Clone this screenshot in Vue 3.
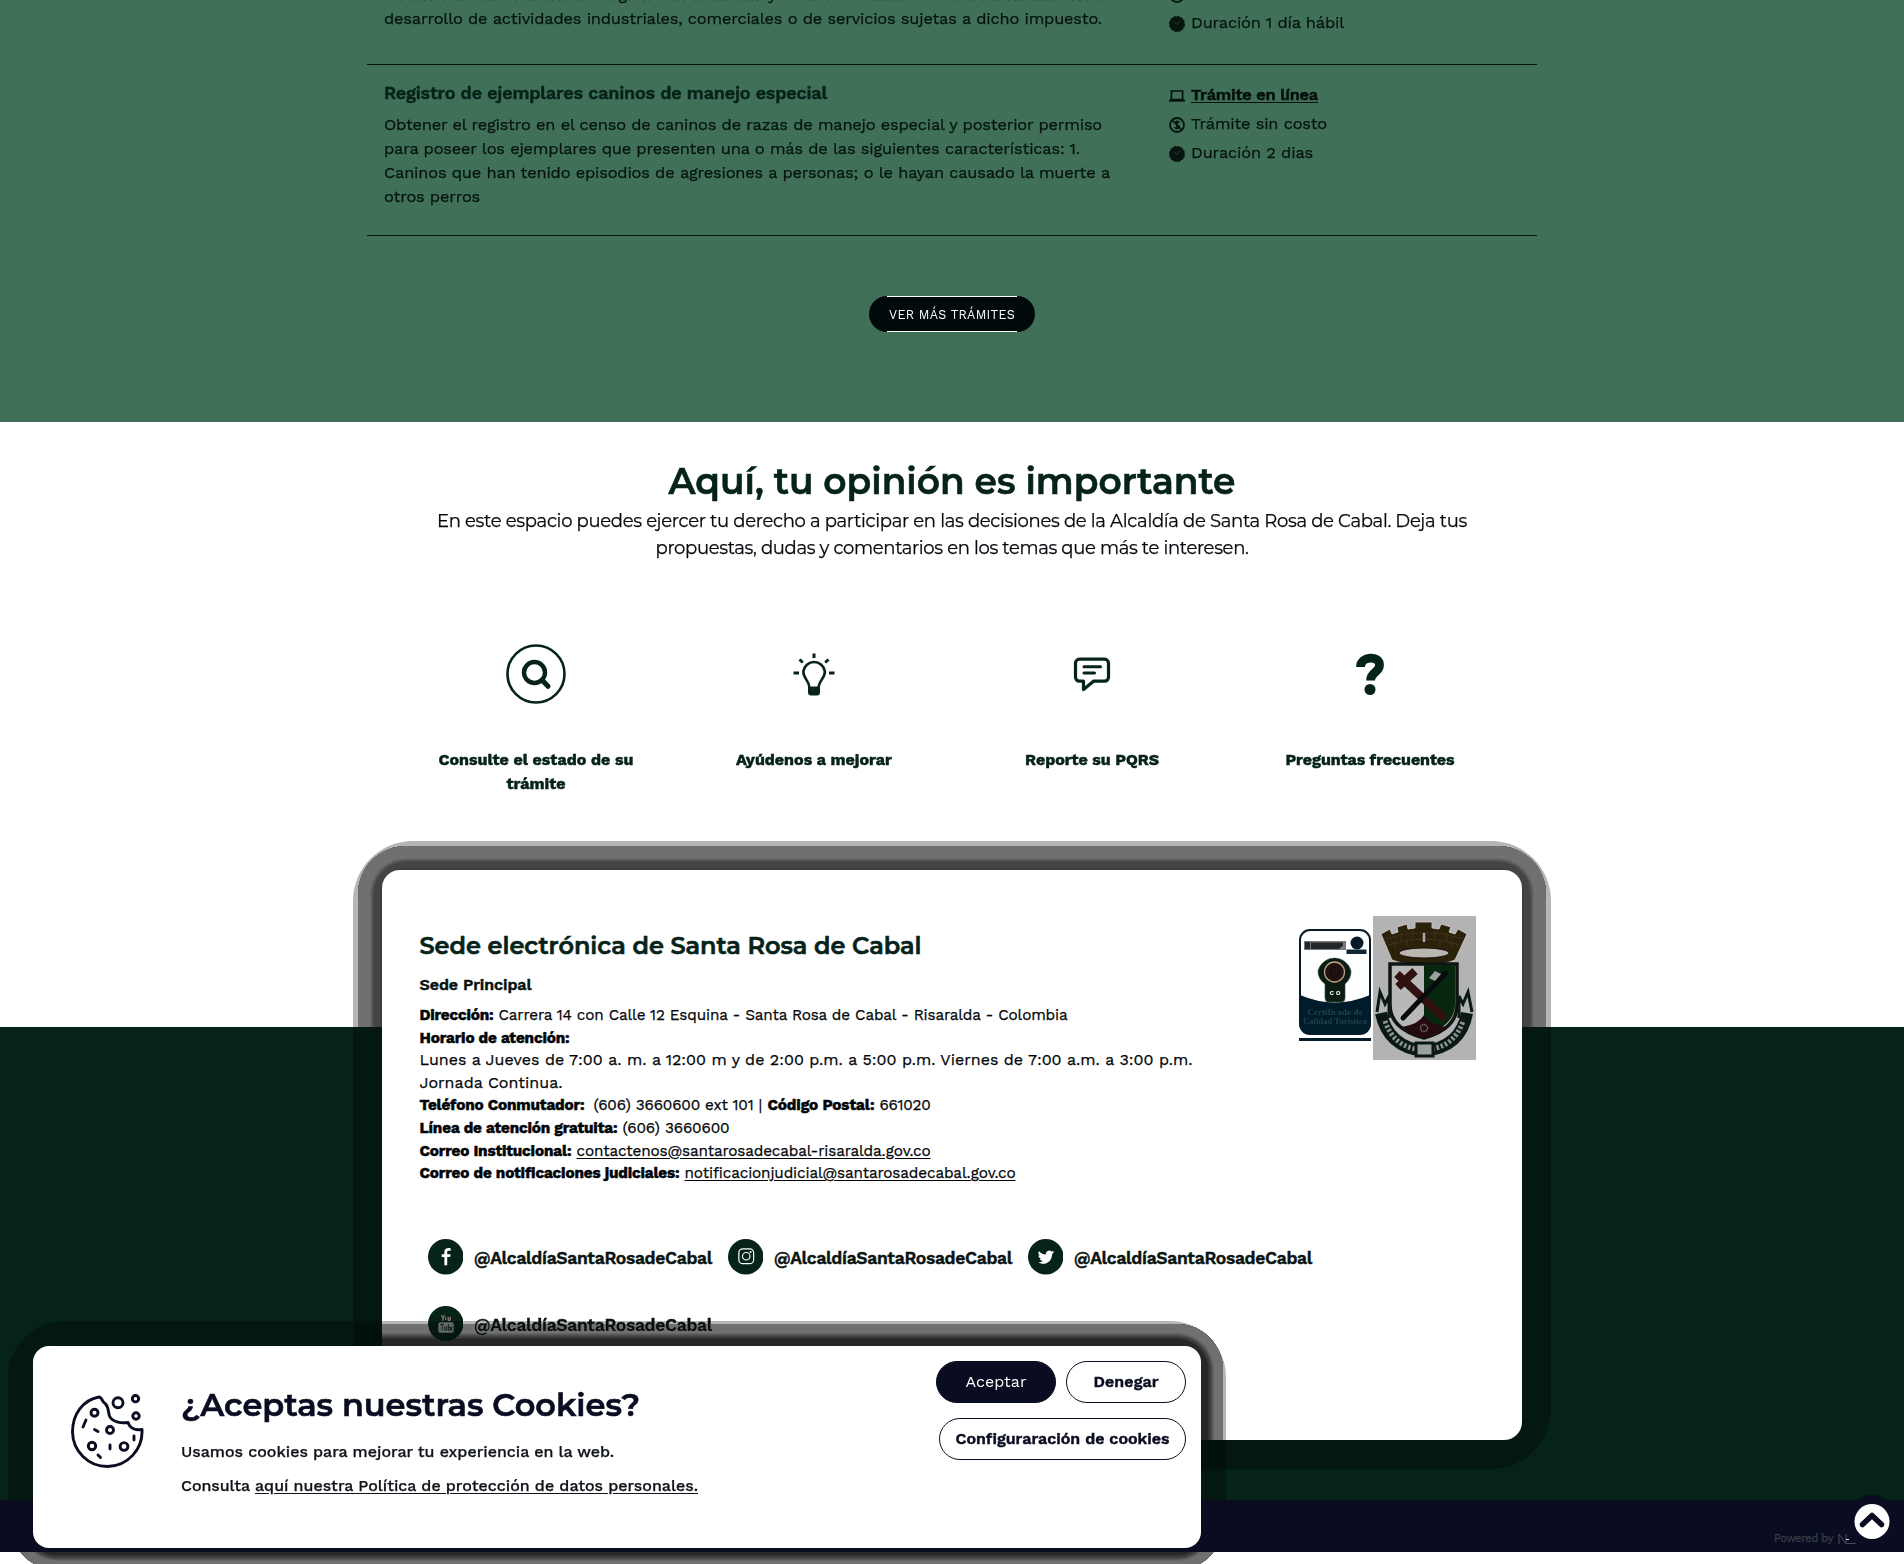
<script setup>
// Spreads the letters of a single line so that it fills the given measure.
const vFit = {
  mounted(el, { value }) {
    const natural = el.getBoundingClientRect().width
    el.style.letterSpacing = (value - natural) / el.textContent.length + 'px'
  }
}

const actions = [
  { icon: 'search', lines: [['Consulte el estado de su', 195], ['trámite', 59]] },
  { icon: 'bulb', lines: [['Ayúdenos a mejorar', 156]] },
  { icon: 'chat', lines: [['Reporte su PQRS', 134]] },
  { icon: 'question', lines: [['Preguntas frecuentes', 169]] }
]

const contact = [
  [['Dirección:', 74, 'b'], ['Carrera 14 con Calle 12 Esquina - Santa Rosa de Cabal - Risaralda - Colombia', 569, '']],
  [['Horario de atención:', 150, 'b']],
  [['Lunes a Jueves de 7:00 a. m. a 12:00 m y de 2:00 p.m. a 5:00 p.m. Viernes de 7:00 a.m. a 3:00 p.m.', 773, 'large']],
  [['Jornada Continua.', 143, 'large']],
  [['Teléfono Conmutador:', 165, 'b wide'], ['(606) 3660600 ext 101', 160, ''], ['|', 4, ''], ['Código Postal:', 107, 'b'], ['661020', 51, '']],
  [['Línea de atención gratuita:', 198, 'b'], ['(606) 3660600', 107, '']],
  [['Correo Institucional:', 152, 'b'], ['contactenos@santarosadecabal-risaralda.gov.co', 354, 'u']],
  [['Correo de notificaciones judiciales:', 260, 'b'], ['notificacionjudicial@santarosadecabal.gov.co', 331, 'u']]
]

const networks = ['facebook', 'instagram', 'twitter', 'youtube']
</script>

<template>
  <div class="page">
    <section class="procedures">
      <div class="list">
        <article class="row first">
          <div class="desc">
            <p><span v-fit="727">Obtener la cancelación del registro de industria y comercio cuando cese definitivamente el</span></p>
            <p><span v-fit="718">desarrollo de actividades industriales, comerciales o de servicios sujetas a dicho impuesto.</span></p>
          </div>
          <ul class="facts">
            <li>
              <svg viewBox="0 0 16 16"><circle cx="8" cy="8" r="7" fill="none" stroke="currentColor" stroke-width="1.9" /></svg>
              <span v-fit="135">Trámite sin costo</span>
            </li>
            <li>
              <svg viewBox="0 0 16 16"><circle cx="8" cy="8" r="7.3" fill="#07140f" stroke="#07140f" stroke-width="1.3" stroke-dasharray="3 .8" /><path d="M5 6l3 2.5 3-4" fill="none" stroke="#35463d" stroke-width=".8" /></svg>
              <span v-fit="153">Duración 1 día hábil</span>
            </li>
          </ul>
        </article>
        <article class="row second">
          <div class="desc">
            <h3><span v-fit="443">Registro de ejemplares caninos de manejo especial</span></h3>
            <p><span v-fit="718">Obtener el registro en el censo de caninos de razas de manejo especial y posterior permiso</span></p>
            <p><span v-fit="696">para poseer los ejemplares que presenten una o más de las siguientes características: 1.</span></p>
            <p><span v-fit="726">Caninos que han tenido episodios de agresiones a personas; o le hayan causado la muerte a</span></p>
            <p><span v-fit="96">otros perros</span></p>
          </div>
          <ul class="facts">
            <li>
              <svg viewBox="0 0 16 16"><path d="M2.400 3h11.200v8.500H2.400z" fill="none" stroke="currentColor" stroke-width="1.700" /><path d="M0 11.500h16v2.200H0z" fill="currentColor" /></svg>
              <a v-fit="127">Trámite en línea</a>
            </li>
            <li>
              <svg viewBox="0 0 16 16"><circle cx="8" cy="8" r="7" fill="none" stroke="currentColor" stroke-width="1.800" /><path d="M3 3l10 10M10.600 5.600C9.500 4.300 6 4.300 6 6.100c0 2 4.400 1.500 4.400 3.700 0 2-3.500 2.200-4.900.5M8 3.500v9" fill="none" stroke="currentColor" stroke-width="1.500" /></svg>
              <span v-fit="136">Trámite sin costo</span>
            </li>
            <li>
              <svg viewBox="0 0 16 16"><circle cx="8" cy="8" r="7.300" fill="#07140f" stroke="#07140f" stroke-width="1.300" stroke-dasharray="3 .8" /><path d="M5 6l3 2.500 3-4" fill="none" stroke="#35463d" stroke-width=".8" /></svg>
              <span v-fit="122">Duración 2 dias</span>
            </li>
          </ul>
        </article>
      </div>
      <button class="more"><span v-fit="126">VER MÁS TRÁMITES</span></button>
    </section>

    <section class="opinion">
      <h2><span v-fit="567">Aquí, tu opinión es importante</span></h2>
      <p><span v-fit="1030">En este espacio puedes ejercer tu derecho a participar en las decisiones de la Alcaldía de Santa Rosa de Cabal. Deja tus</span></p>
      <p><span v-fit="593">propuestas, dudas y comentarios en los temas que más te interesen.</span></p>
      <div class="actions">
        <a v-for="a in actions" :key="a.icon" class="action">
          <svg viewBox="0 0 60 60" fill="none" stroke="currentColor">
            <template v-if="a.icon === 'search'">
              <circle cx="30" cy="30" r="28.500" stroke-width="2.600" />
              <circle cx="28.500" cy="28.500" r="10.500" stroke-width="4.400" />
              <path d="M36 36l6 6.300" stroke-width="5" stroke-linecap="round" />
            </template>
            <template v-else-if="a.icon === 'bulb'">
              <path d="M25.300 43c0-6-6-8.500-6-15.500a10.900 10.900 0 0 1 21.600 0C40.900 34.500 34.700 37 34.700 43" stroke-width="2.600" />
              <path d="M24 42.500h12V48q0 3.500-3 3.500h-6q-3 0-3-3.500z" fill="currentColor" stroke="none" />
              <path d="M30 9.500v4.500M15.500 15.500l3.300 3M44.500 15.500l-3.300 3M9.500 29H15M45 29h5.500" stroke-width="3" />
            </template>
            <template v-else-if="a.icon === 'chat'">
              <path d="M17.500 15.200h25a4 4 0 0 1 4 4v14a4 4 0 0 1-4 4H31.500L21.500 45.500v-8.300h-4a4 4 0 0 1-4-4v-14a4 4 0 0 1 4-4z" stroke-width="3.200" stroke-linejoin="round" />
              <path d="M22 22.800h16.500M22 29h10.500" stroke-width="3" stroke-linecap="round" />
            </template>
            <template v-else>
              <path d="M20.500 23C20.500 12 39.500 11 39.500 21 39.500 29 30.500 27.500 30.500 36.500" stroke-width="8.800" />
              <circle cx="30" cy="45.500" r="5.500" fill="currentColor" stroke="none" />
            </template>
          </svg>
          <span v-for="l in a.lines" :key="l[0]" class="label"><span v-fit="l[1]">{{ l[0] }}</span></span>
        </a>
      </div>
    </section>

    <footer class="site">
      <div class="frame">
        <div class="halo"></div>
        <div class="halo inner"></div>
        <div class="card">
          <div class="info">
            <h2><span v-fit="502">Sede electrónica de Santa Rosa de Cabal</span></h2>
            <h3><span v-fit="112">Sede Principal</span></h3>
            <div v-for="(line, i) in contact" :key="i" class="line">
              <span v-for="s in line" :key="s[0]" v-fit="s[1]" :class="s[2]">{{ s[0] }}</span>
            </div>
            <div class="networks">
              <a v-for="n in networks" :key="n" class="network">
                <svg viewBox="0 0 36 36">
                  <circle cx="18" cy="18" r="18" fill="#062317" />
                  <path v-if="n === 'facebook'" d="M19.500 26.500v-8.200h3l.4-2.800h-3.400v-2c0-1 .5-1.500 1.500-1.500h2V9.300c-4.300-.6-6.400.8-6.400 3.800v2.400h-2.700v2.800h2.700v8.200z" fill="#fff" />
                  <g v-else-if="n === 'instagram'" fill="none" stroke="#fff" stroke-width="1.200">
                    <rect x="11" y="10" width="15" height="15" rx="4" />
                    <circle cx="18.500" cy="17.500" r="3.800" />
                    <circle cx="22.900" cy="13.200" r=".5" />
                  </g>
                  <path v-else-if="n === 'twitter'" d="M26.500 13c-.6.300-1.200.5-1.900.6.700-.4 1.200-1 1.400-1.800-.6.400-1.300.6-2 .8a3.700 3.700 0 0 0-6 3.200c-2.800-.1-5.300-1.500-7-3.600-.9 1.600-.4 3.600 1.100 4.600-.5 0-1-.1-1.500-.4 0 1.700 1.200 3.200 2.900 3.600-.5.100-1 .1-1.500 0 .5 1.400 1.700 2.300 3.200 2.300a7 7 0 0 1-5 1.400c6.500 4 14.300-.5 14.300-8.500.8-.6 1.500-1.300 2-2.200z" fill="#fff" />
                  <g v-else>
                    <path d="M13.600 9l1.600 3.500V15m1.600-6-1.600 3.500M18 11v3M20.500 11v3.500h2V11" fill="none" stroke="#b08f88" />
                    <rect x="10.500" y="16.500" width="15.500" height="10.500" rx="2" fill="#8d9591" />
                    <path d="M12.300 18.700h4M14.300 18.700v6M17 20.500v4h2v-4M20.700 18.500v6h2v-3h-2M25 24.500h-1.300v-3.200H25" fill="none" stroke="#062317" stroke-width=".9" />
                  </g>
                </svg>
                <span v-fit="238">@AlcaldíaSantaRosadeCabal</span>
              </a>
            </div>
          </div>
          <div class="logos">
            <svg class="seal" viewBox="0 0 72 113">
              <rect x="1" y="1" width="70" height="104" rx="10" fill="#fff" stroke="#071b29" stroke-width="2" />
              <path d="M1 66q35 15 70 0v29q0 10-10 10H11q-10 0-10-10z" fill="#001c2b" />
              <rect x="5" y="12" width="42" height="9" fill="#77787a" />
              <path d="M6 13h5v7H6zM12 13.500h32v3l-4 3.500H12z" fill="#232629" />
              <circle cx="58" cy="14" r="6.500" fill="#071b29" />
              <path d="M47.500 20.500h20v4.500h-20z" fill="#102532" />
              <path d="M26 55q-7-5-7-13a17 17 0 0 1 33 0q0 8-6 13v14q0 4-4 4H30q-4 0-4-4z" fill="#0a1c12" stroke="#3d4b43" stroke-width=".7" />
              <circle cx="35.500" cy="43" r="10" fill="#24100f" stroke="#b9a487" stroke-width="1.300" />
              <circle cx="35.500" cy="43" r="4.500" fill="none" stroke="#101010" stroke-width="1.500" />
              <text x="36" y="65.500" fill="#e8eee9" font-size="6.500" font-weight="700" textLength="11" text-anchor="middle">CO</text>
              <text x="36" y="86" class="sealText" textLength="55" text-anchor="middle">Certificado de</text>
              <text x="36" y="95" class="sealText" textLength="64" text-anchor="middle">Calidad Turística</text>
              <path d="M0 109h72v3H0z" fill="#071b29" />
            </svg>
            <svg class="crest" viewBox="0 0 103 144">
              <path d="M0 0h103v144H0z" fill="#b3b3b3" />
              <path d="M8 18l9-5 2 5 6-2-1-5 10-3 1 5 7-1V6h17v6l7 1 2-5 10 3-2 5 6 2 3-5 9 5-12 26q-30 14-63 0z" fill="#2c210b" stroke="#d7d3c8" stroke-width=".8" />
              <path d="M12 23q39-13 78 0M15 29q36-12 72 0M28 17v8M40 15v8M62 15v8M74 17v8M22 25v8M79 25v8M34 23v7M67 23v7" fill="none" stroke="#41321a" stroke-width="1" />
              <path d="M51 17v9" stroke="#aaa" stroke-width="2.500" />
              <ellipse cx="51" cy="37" rx="25" ry="5" fill="#b9b7b0" stroke="#17120a" />
              <path d="M17 48h67v41q0 24-33 33-34-9-34-33z" fill="#b8b8b8" stroke="#0d1613" stroke-width="3.500" />
              <path d="M51 49h31v40q0 20-31 31z" fill="#07280f" />
              <path d="M29 111q17-3 22-12 5 9 22 12-9 9-22 11-14-2-22-11z" fill="#250b0d" />
              <circle cx="51" cy="112" r="3.500" fill="none" stroke="#777" stroke-width="1.500" stroke-dasharray="1.500 .8" />
              <path d="M24 58L72 103M25 71L42 55" fill="none" stroke="#311012" stroke-width="8" />
              <path d="M30 102L73 57" stroke="#080b0d" stroke-width="5" stroke-linecap="round" />
              <path d="M56 62l6-7 6 3-6 7z" fill="#9aa09d" />
              <path d="M4 96l3-20 5 12 4-8v22M99 96l-4-20-5 12-4-8v22" fill="none" stroke="#0a1a13" stroke-width="3" />
              <path d="M8 97q7 34 43 38 37-4 43-38" fill="none" stroke="#0a1a13" stroke-width="12" />
              <path d="M12 105q8 24 31 28M59 133q23-4 31-28" fill="none" stroke="#8c938f" stroke-width="5" stroke-dasharray="2.500 2" />
              <path d="M43 127h17v13H43z" fill="#9b9f9d" stroke="#0a1a13" stroke-width="3" />
            </svg>
          </div>
        </div>
      </div>
    </footer>
    <div class="bar">
      <span v-fit="59">Powered by</span>
      <svg class="mark" viewBox="0 0 20 14"><path d="M2 12V2l7 10V2" fill="none" stroke="#4b4d5c" /><path d="M10 11.500h9" stroke="#45475a" /><path d="M9 7.500h3" stroke="#e8e8ee" /></svg>
    </div>

    <button class="top" aria-label="Subir">
      <svg viewBox="0 0 54 54"><circle cx="27" cy="27" r="27" fill="#0a0d22" /><circle cx="27" cy="26.500" r="17.500" fill="#fff" /><path d="M17.500 29.500l9.500-9 9.500 9" fill="none" stroke="#0a0d22" stroke-width="5.500" stroke-linecap="round" stroke-linejoin="round" /></svg>
    </button>

    <div class="dialog">
      <div class="halo"></div>
      <div class="halo inner"></div>
      <aside class="cookies">
        <svg class="cookie" viewBox="0 0 73 74" fill="none" stroke="#0a0d22" stroke-width="2.900" stroke-linejoin="round">
          <path d="M28 3C12 6 1.500 20 1.500 38A35 35 0 0 0 36.500 72.500 35 35 0 0 0 71 35.500C65 36.500 59 34.500 57 28.500 50 29.500 41 28 38.500 22 37 17 37.500 12 34 9.500 31 8 31 3 28 3z" />
          <circle cx="47" cy="8.800" r="5" /><circle cx="64.500" cy="4.700" r="3.200" /><circle cx="65" cy="22" r="3.200" />
          <circle cx="23.500" cy="18.700" r="3.500" /><circle cx="39" cy="36" r="3.500" /><circle cx="21" cy="52" r="3.700" /><circle cx="53" cy="52.500" r="3.900" />
          <path d="M15 26l-3 7M23.500 35.500l3.500 2M63 42v4M39 51v4M27 61l2.500 2.500" stroke-linecap="round" />
        </svg>
        <div class="message">
          <h2><span v-fit="459">¿Aceptas nuestras Cookies?</span></h2>
          <p><span v-fit="433">Usamos cookies para mejorar tu experiencia en la web.</span></p>
          <p><span v-fit="69">Consulta</span><a v-fit="443">aquí nuestra Política de protección de datos personales.</a></p>
        </div>
        <div class="choices">
          <button class="solid"><span v-fit="61">Aceptar</span></button>
          <button><span v-fit="65">Denegar</span></button>
          <button class="long"><span v-fit="214">Configuraración de cookies</span></button>
        </div>
      </aside>
    </div>
  </div>
</template>

<style>
body { margin: 0; background: #fff; overflow: hidden; }
</style>

<style scoped>
.page { position: relative; width: 1904px; height: 1564px; overflow: hidden; background: #fff; isolation: isolate; font: 16px "Work Sans", "Inter", sans-serif; color: #07130f; -webkit-text-stroke: .25px currentColor; }
.page span, .page a { white-space: nowrap; }
.page svg { -webkit-text-stroke: 0; }
h2, h3, p, ul { margin: 0; padding: 0; }
h2, .opinion p { font-family: "Montserrat", "Inter", sans-serif; }
h2 { -webkit-text-stroke-width: .6px; }
h3, .b, .label, .network { -webkit-text-stroke-width: .45px; }
button { font-family: inherit; padding: 0; }

.procedures { display: flow-root; height: 422px; overflow: hidden; background: #407058; color: #05130d; }
.list { width: 1170px; margin: -17px auto 0; }
.row { display: flex; box-sizing: border-box; border-bottom: 1px solid #03150d; padding-left: 17px; }
.first { height: 82px; }
.second { height: 171px; padding-top: 16px; }
.desc { width: 785px; font-size: 16.400px; line-height: 24px; }
.desc h3 { margin-bottom: 8px; font-size: 18px; line-height: 24px; font-weight: 600; color: #06231a; }
.facts { list-style: none; margin-top: -1px; font-size: 16.400px; line-height: 29px; }
.first .facts { margin-top: -4px; }
.facts li { display: flex; align-items: center; gap: 6px; height: 29px; }
.facts svg { width: 16px; height: 16px; margin-top: 2px; }
.facts a { font-weight: 600; text-decoration: underline; text-underline-offset: 2px; color: #03100b; -webkit-text-stroke-width: .5px; }
.more { display: block; width: 166px; height: 36px; margin: 60px auto 0; border: 0; border-radius: 18px; background: linear-gradient(#fff, #fff) 18px 0 / 130px 1px no-repeat, linear-gradient(#fff, #fff) 18px 100% / 130px 1px no-repeat, #000a0b; color: #fff; font-size: 12.500px; font-weight: 400; -webkit-text-stroke: 0; }

.opinion { height: 448px; box-sizing: border-box; padding-top: 37px; text-align: center; }
.opinion h2 { margin-bottom: 5px; font-size: 36px; line-height: 44px; font-weight: 600; color: #06231a; }
.opinion p { font-size: 18px; line-height: 27px; color: #05080c; }
.actions { display: flex; width: 1112px; margin: 82px auto 0; position: relative; left: 1px; }
.action { display: flex; flex-direction: column; align-items: center; width: 278px; color: #06231a; }
.action svg { width: 60px; height: 60px; margin-bottom: 44px; }
.label { font-size: 16px; line-height: 24px; font-weight: 700; }

.site { height: 630px; background: linear-gradient(transparent 157px, #062317 157px); }
.frame { position: relative; width: 1140px; height: 570px; margin: 0 auto; }
.halo { position: absolute; inset: -29px; border-radius: 60px; background: rgba(0, 0, 0, .29); }
.halo.inner { inset: -24px; border-radius: 48px; mix-blend-mode: darken; background: #3f3f3f; box-shadow: inset 0 0 0 12px #707070, inset 0 0 0 13px #686868, inset 0 0 0 14px #5f5f5f, inset 0 0 0 15px #555, inset 0 0 0 16px #4b4b4b, inset 0 0 0 22px #444; }
.card { position: relative; box-sizing: border-box; display: flex; height: 100%; padding: 60px 46px 0 37.500px; border-radius: 18px; background: #fff; }
.info { width: 900px; flex: none; }
.info h2 { margin-bottom: 13px; padding-top: 1px; font-size: 24px; line-height: 30px; font-weight: 600; color: #06231a; }
.info h3 { margin-bottom: 8px; font-size: 16px; line-height: 22px; font-weight: 600; }
.line { display: flex; align-items: baseline; gap: 5px; height: 22.600px; font-size: 15.300px; line-height: 22.600px; color: #020508; }
.b { font-weight: 700; }
.large { font-size: 16px; }
.wide { margin-right: 4px; }
.u { text-decoration: underline; text-underline-offset: 2px; }
.networks { display: grid; grid-template-columns: repeat(3, 300px); row-gap: 31px; width: 900px; margin: 54px 0 0 8px; }
.network { display: flex; align-items: center; gap: 11px; height: 36px; font-size: 17.500px; font-weight: 600; color: #0a1511; }
.network span { padding-top: 2px; }
.network svg { width: 35.500px; height: 35.500px; }
.logos { display: flex; align-items: flex-start; gap: 2px; flex: none; width: 177px; margin: -14px 0 0 -20.500px; }
.seal { width: 72px; height: 113px; margin-top: 13px; }
.sealText { font-size: 8.500px; font-family: "Liberation Serif", serif; font-weight: 700; fill: #24414f; }
.crest { width: 103px; height: 144px; }

.bar { position: relative; z-index: 2; display: flex; align-items: flex-start; gap: 4px; height: 52px; box-sizing: border-box; padding: 32px 0 0 1774px; background: #0a0d22; color: #3b3d49; font-size: 11px; line-height: 14px; }
.mark { width: 20px; height: 14px; }
.top { position: absolute; z-index: 2; left: 1845px; top: 1495px; width: 54px; height: 54px; border: 0; background: none; }
.top svg { display: block; width: 54px; height: 54px; }

/* The dialog stays unisolated so its halo can darken the page beneath it. */
.dialog { position: absolute; left: 33px; top: 1346px; width: 1168px; height: 202px; }
.dialog .halo { z-index: 1; inset: -25px; border-radius: 56px; }
.dialog .inner { inset: -22px; border-radius: 46px; background: #272727; box-shadow: inset 0 0 0 9px #707070, inset 0 0 0 10px #666, inset 0 0 0 11px #5a5a5a, inset 0 0 0 12px #4c4c4c, inset 0 0 0 14px #3e3e3e, inset 0 0 0 15px #303030; }
.cookies { position: relative; z-index: 3; display: flex; box-sizing: border-box; height: 100%; padding-left: 38px; border-radius: 16px; background: #fff; color: #10141a; }
.cookie { width: 73px; height: 74px; margin-top: 48px; }
.message { width: 720px; margin: 39px 0 0 37px; }
.message h2 { margin-bottom: 10px; font-size: 32px; line-height: 40px; font-weight: 600; color: #0a0d22; }
.message p { display: flex; gap: 5px; font-size: 16px; line-height: 34px; font-weight: 500; }
.message a { text-decoration: underline; text-underline-offset: 2px; }
.choices { display: flex; flex-wrap: wrap; justify-content: flex-end; align-content: flex-start; gap: 15px 10px; width: 285px; padding-top: 15px; }
.choices button { width: 120px; height: 42px; padding-bottom: 2px; border: 1px solid #0a0d22; border-radius: 21px; background: #fff; color: #0a0d22; font-size: 16px; font-weight: 600; -webkit-text-stroke-width: .45px; }
.choices .solid { background: #0a0d22; color: #fff; font-weight: 400; -webkit-text-stroke: 0; }
.choices .long { width: 247px; }
</style>
